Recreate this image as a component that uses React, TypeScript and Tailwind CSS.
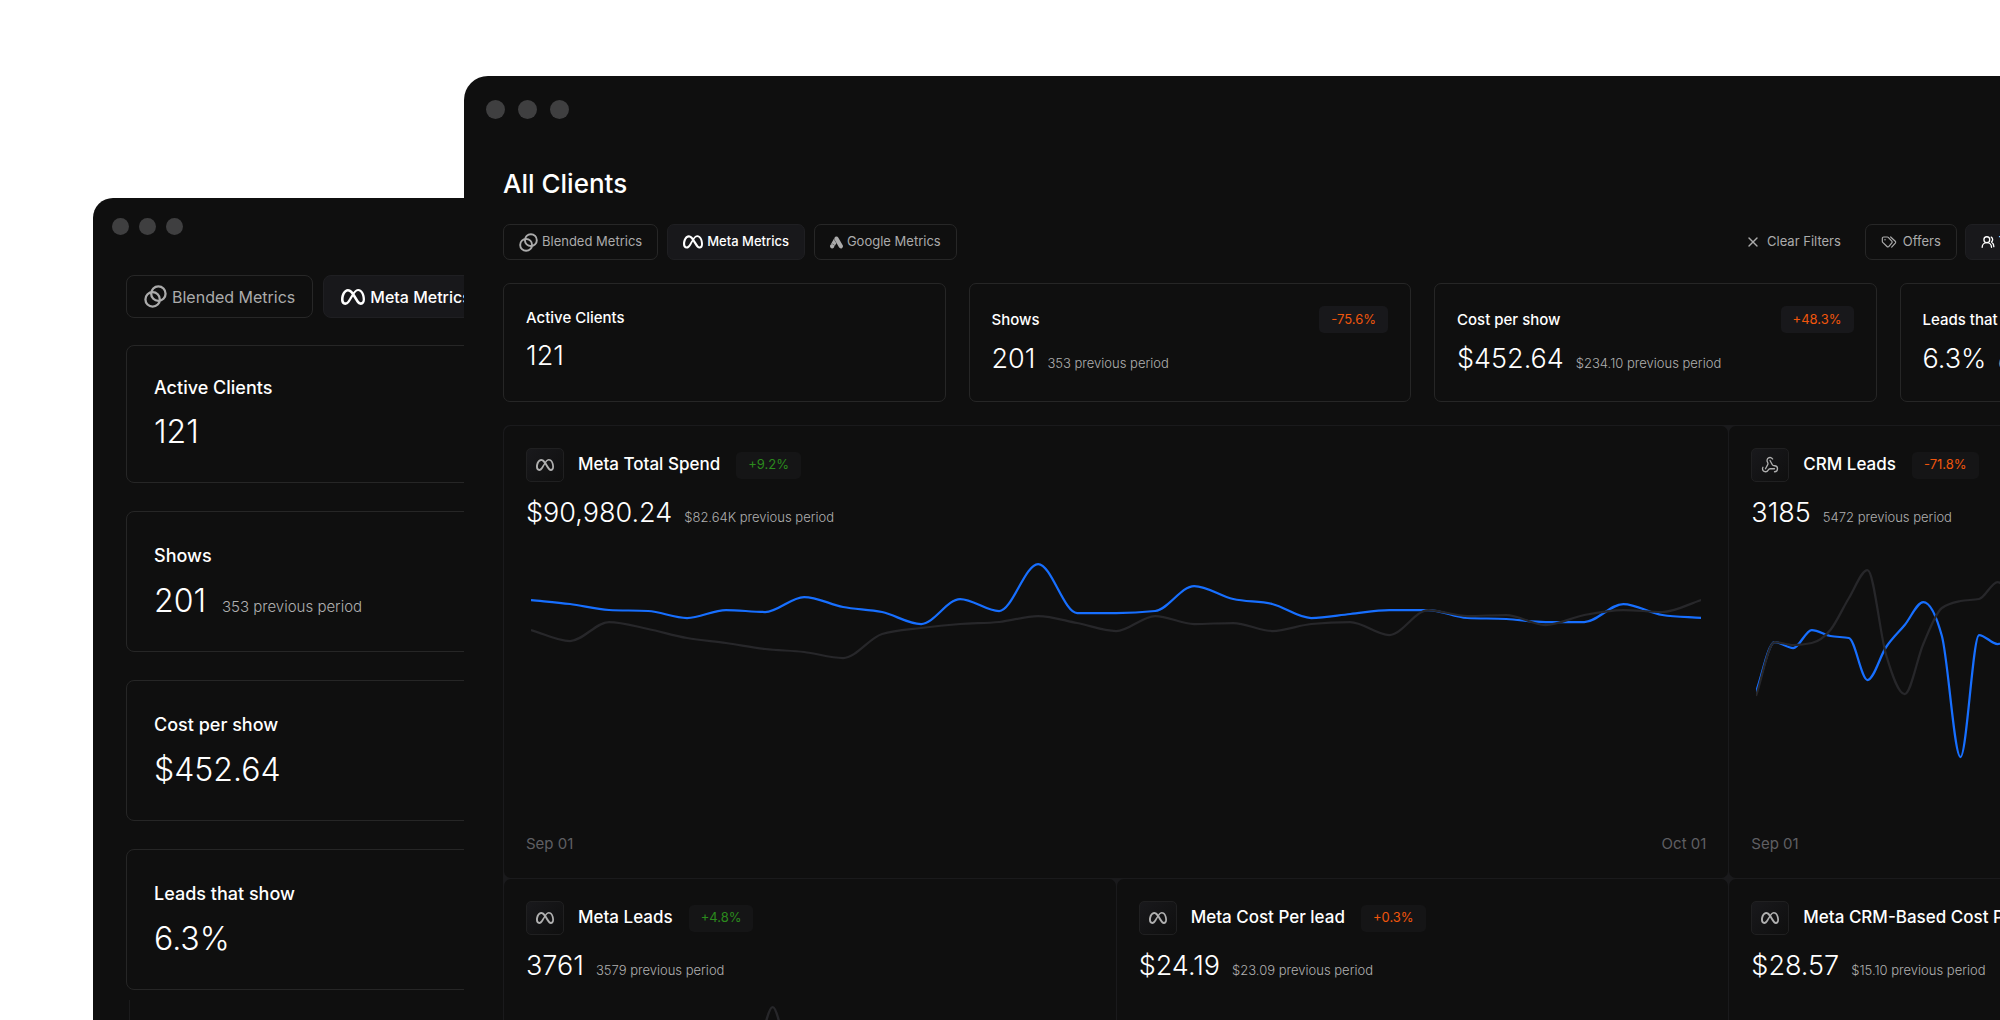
import type { ReactNode } from "react";
import clsx from "clsx";
import { UsersRound, Webhook, X } from "lucide-react";
import { FaMeta } from "react-icons/fa6";
import { SiGoogleads } from "react-icons/si";

type Size = "md" | "lg";

type Metric = {
  label: string;
  value: string;
  previous?: string;
  change?: string;
  good?: boolean;
};

// Daily series, one point per day. Measured downwards from the top of a 280 unit plot.
const PLOT_HEIGHT = 280;

const spend = {
  current: [
    60, 64, 70, 71, 78, 70, 72, 57, 67, 72, 84, 59, 71, 24, 73, 73, 71, 46, 59, 64, 78, 74, 70, 70,
    78, 79, 82, 82, 64, 75, 78,
  ],
  previous: [
    90, 101, 82, 89, 98, 103, 109, 112, 118, 94, 88, 84, 82, 76, 83, 91, 76, 84, 83, 91, 84, 82, 95,
    70, 76, 75, 85, 75, 70, 72, 60,
  ],
};

const crmLeads = {
  current: [
    152, 102, 108, 90, 96, 98, 140, 107, 85, 62, 96, 217, 95, 104, 96, 88, 110, 124, 98, 90, 84, 102,
    118, 130, 96, 88, 92, 104, 99, 90, 94,
  ],
  previous: [
    156, 102, 105, 103, 90, 58, 30, 115, 154, 104, 68, 61, 59, 42, 66, 80, 92, 71, 64, 88, 102, 96,
    84, 70, 66, 78, 90, 101, 88, 74, 80,
  ],
};

const metaLeads = {
  current: [
    120, 126, 118, 122, 130, 124, 116, 121, 128, 133, 125, 119, 116, 122, 127, 131, 124, 118, 121,
    126, 130, 123, 117, 120, 125, 129, 124, 119, 122, 126, 121,
  ],
  previous: [
    140, 134, 138, 131, 128, 135, 141, 137, 130, 126, 132, 128, 80, 14, 82, 126, 133, 139, 131, 127,
    134, 140, 136, 129, 125, 131, 138, 133, 128, 135, 130,
  ],
};

const costPerLead = {
  current: [
    118, 121, 124, 119, 115, 120, 126, 123, 117, 114, 119, 125, 128, 122, 116, 118, 123, 127, 121,
    117, 120, 124, 126, 119, 115, 121, 125, 122, 118, 120, 123,
  ],
  previous: [
    132, 129, 126, 130, 135, 133, 128, 124, 127, 131, 136, 134, 129, 125, 128, 132, 137, 133, 127,
    124, 129, 134, 131, 126, 128, 133, 136, 130, 125, 127, 131,
  ],
};

const kpis: Metric[] = [
  { label: "Active Clients", value: "121" },
  { label: "Shows", value: "201", previous: "353", change: "-75.6%" },
  { label: "Cost per show", value: "$452.64", previous: "$234.10", change: "+48.3%" },
  { label: "Leads that show", value: "6.3%", previous: "6.5%", change: "-3.1%" },
];

/** Monotone cubic path, so the line never overshoots its points. */
function linePath(values: number[], step: number) {
  const slopes = values.slice(1).map((v, i) => (v - values[i]) / step);
  const tangents = values.map((_, i) => {
    if (i === 0) return slopes[0];
    if (i === values.length - 1) return slopes[slopes.length - 1];
    const a = slopes[i - 1];
    const b = slopes[i];
    if (a * b <= 0) return 0;
    return Math.sign(a) * Math.min(Math.abs(a), Math.abs(b), Math.abs(a + b) / 4) * 2;
  });
  return values.reduce((d, y, i) => {
    if (i === 0) return `M0,${y}`;
    const x = i * step;
    const c = step / 3;
    const y1 = values[i - 1] + tangents[i - 1] * c;
    const y2 = y - tangents[i] * c;
    return `${d}C${x - step + c},${y1} ${x - c},${y2} ${x},${y}`;
  }, "");
}

function LineChart({ current, previous }: { current: number[]; previous: number[] }) {
  const step = 10;
  return (
    <svg
      className="block h-[280px] w-full"
      viewBox={`0 0 ${(current.length - 1) * step} ${PLOT_HEIGHT}`}
      preserveAspectRatio="none"
      fill="none"
      strokeWidth="2.25"
      aria-hidden="true"
    >
      <path d={linePath(current, step)} stroke="#176fff" vectorEffect="non-scaling-stroke" />
      <path d={linePath(previous, step)} stroke="#27272a" vectorEffect="non-scaling-stroke" />
    </svg>
  );
}

function BlendIcon({ className }: { className?: string }) {
  return (
    <svg className={className} viewBox="0 0 24 24" fill="none" stroke="currentColor" strokeWidth="2.4">
      <circle cx="15" cy="9" r="7.5" />
      <circle cx="9" cy="15" r="7.5" />
    </svg>
  );
}

function TagsIcon({ className }: { className?: string }) {
  return (
    <svg
      className={className}
      viewBox="0 0 24 18"
      fill="none"
      stroke="currentColor"
      strokeWidth="1.8"
      strokeLinecap="round"
      strokeLinejoin="round"
    >
      <path d="M2 3.5a2 2 0 0 1 2-2h5.500a2 2 0 0 1 1.400.6l5.300 5.600a2 2 0 0 1 .1 2.700l-4.400 5.200a2 2 0 0 1-2.900.1L2.600 9.600A2 2 0 0 1 2 8.200z" />
      <path d="M14.500 1.500l6.900 6.400a2 2 0 0 1 .1 2.700l-5.500 6" />
      <path d="M6 5.500h.01" strokeWidth="2.200" />
    </svg>
  );
}

function WindowDots({ size = "md" }: { size?: Size }) {
  const dot = size === "md" ? "size-[19px]" : "size-[17px]";
  return (
    <div className={clsx("flex", size === "md" ? "gap-[13px] px-[22px] pt-6" : "gap-2.5 px-[19px] pt-5")}>
      {[0, 1, 2].map((i) => (
        <span key={i} className={clsx("rounded-full bg-[#3f3f40]", dot)} />
      ))}
    </div>
  );
}

function TabButton({
  icon,
  active,
  size = "md",
  className,
  children,
}: {
  icon: ReactNode;
  active?: boolean;
  size?: Size;
  className?: string;
  children: ReactNode;
}) {
  return (
    <button
      type="button"
      className={clsx(
        "flex shrink-0 items-center border whitespace-nowrap",
        size === "md" ? "h-9 gap-1 rounded-[7px] px-[15px] text-[13px]" : "h-[43px] gap-[5px] rounded-lg px-[17px] text-[16px]",
        active ? "border-[#1f1f22] bg-[#18181b] font-medium text-white" : "border-[#272727] text-[#ababab]",
        className,
      )}
    >
      {icon}
      {children}
    </button>
  );
}

function Change({ metric, size = "md", plain }: { metric: Metric; size?: Size; plain?: boolean }) {
  return (
    <span
      className={clsx(
        "flex items-center rounded-[5px] px-3 whitespace-nowrap",
        size === "md" ? "h-[27px] text-[13px]" : "h-[31px] text-[15px]",
        plain ? "bg-[#151516]" : "bg-[#18181b]",
        metric.good ? "text-[#2b8a1d]" : "text-[#f0560c]",
      )}
    >
      {metric.change}
    </span>
  );
}

function Value({ metric, size = "md" }: { metric: Metric; size?: Size }) {
  return (
    <div className={clsx("flex items-baseline whitespace-nowrap", size === "md" ? "gap-3" : "gap-4")}>
      <span className={clsx("font-light text-white", size === "md" ? "text-[27px]/9" : "text-[32px]/[44px]")}>
        {metric.value}
      </span>
      {metric.previous && (
        <span className={clsx("font-light text-[#b0b0b0]", size === "md" ? "text-[13px]" : "text-[15px]")}>
          {metric.previous} previous period
        </span>
      )}
    </div>
  );
}

function KpiCard({ metric, size = "md" }: { metric: Metric; size?: Size }) {
  return (
    <div
      className={clsx(
        "flex flex-col gap-2 border border-[#262626]",
        size === "md" ? "rounded-[7px] px-[22px] pt-[22px] pb-6" : "rounded-lg px-[27px] py-7",
      )}
    >
      <div className="flex items-center justify-between">
        <h2 className={clsx("font-medium text-white", size === "md" ? "text-[15px]/6" : "text-[18px]/7")}>
          {metric.label}
        </h2>
        {metric.change && <Change metric={metric} size={size} />}
      </div>
      <Value metric={metric} size={size} />
    </div>
  );
}

function ChartCard({
  metric,
  icon,
  series,
  className,
}: {
  metric: Metric;
  icon: ReactNode;
  series: { current: number[]; previous: number[] };
  className?: string;
}) {
  return (
    <article className={clsx("rounded-[7px] bg-[#0f0f0f] px-[22px] py-[22px]", className)}>
      <header className="flex items-center gap-3.5">
        <span className="flex h-[34px] w-[38px] shrink-0 items-center justify-center rounded-[5px] border border-[#202021] bg-linear-to-br from-[#19191c] to-[#0f0f0f] text-[#b0b0b0]">
          {icon}
        </span>
        <h2 className="pr-0.5 text-[17px] font-medium whitespace-nowrap text-white">{metric.label}</h2>
        <Change metric={metric} plain />
      </header>
      <div className="mt-[13px]">
        <Value metric={metric} />
      </div>
      <div className="mt-[9px] px-[5px]">
        <LineChart {...series} />
      </div>
      <div className="mt-3 flex justify-between text-[15px]/6 text-[#5f5f63]">
        <span>Sep 01</span>
        <span>Oct 01</span>
      </div>
    </article>
  );
}

function BackWindow() {
  return (
    <section className="absolute top-[198px] right-0 left-[93px] rounded-tl-[20px] bg-[#0f0f0f]">
      <WindowDots size="lg" />
      <div className="px-[33px] pt-10">
        <nav className="flex gap-2.5">
          <TabButton size="lg" icon={<BlendIcon className="size-[23px]" />}>
            Blended Metrics
          </TabButton>
          <TabButton size="lg" active icon={<FaMeta className="size-6" />}>
            Meta Metrics
          </TabButton>
        </nav>
        <div className="mt-[27px] flex flex-col gap-7">
          {kpis.map((metric) => (
            <KpiCard
              key={metric.label}
              size="lg"
              metric={metric.label === "Shows" ? metric : { ...metric, previous: undefined }}
            />
          ))}
        </div>
        <div className="mt-2.5 ml-[3px] h-[200px] border-l border-[#1b1b1c]" />
      </div>
    </section>
  );
}

function FrontWindow() {
  const meta = <FaMeta className="size-[18px]" />;
  return (
    <section className="absolute top-[76px] -right-[381px] left-[464px] rounded-t-[24px] bg-[#0f0f0f]">
      <WindowDots />
      <div className="px-[39px] pt-[47px] pb-10">
        <h1 className="text-[26px]/9 font-medium text-white">All Clients</h1>

        <div className="mt-[22px] flex justify-between">
          <nav className="flex gap-[9px]">
            <TabButton icon={<BlendIcon className="size-[19px]" />}>Blended Metrics</TabButton>
            <TabButton active icon={<FaMeta className="size-5" />}>
              Meta Metrics
            </TabButton>
            <TabButton icon={<SiGoogleads className="size-[13px]" />}>Google Metrics</TabButton>
          </nav>
          <div className="flex w-1/3 gap-2">
            <button
              type="button"
              className="flex h-9 items-center gap-1.5 px-4 text-[13px] whitespace-nowrap text-[#ababab]"
            >
              <X className="size-4" strokeWidth={2} />
              Clear Filters
            </button>
            <TabButton className="gap-1.5" icon={<TagsIcon className="h-3 w-4" />}>
              Offers
            </TabButton>
            <TabButton active className="flex-1" icon={<UsersRound className="size-3.5" strokeWidth={2.25} />}>
              Team
            </TabButton>
          </div>
        </div>

        <div className="mt-[23px] grid grid-cols-4 gap-[23px]">
          {kpis.map((metric) => (
            <KpiCard key={metric.label} metric={metric} />
          ))}
        </div>

        <div className="mt-[23px] grid grid-cols-3 gap-px rounded-[7px] bg-[#1a1a1c] p-px">
          <ChartCard
            className="col-span-2"
            icon={meta}
            series={spend}
            metric={{ label: "Meta Total Spend", value: "$90,980.24", previous: "$82.64K", change: "+9.2%", good: true }}
          />
          <ChartCard
            icon={<Webhook className="size-[18px]" strokeWidth={1.75} />}
            series={crmLeads}
            metric={{ label: "CRM Leads", value: "3185", previous: "5472", change: "-71.8%" }}
          />
          <ChartCard
            icon={meta}
            series={metaLeads}
            metric={{ label: "Meta Leads", value: "3761", previous: "3579", change: "+4.8%", good: true }}
          />
          <ChartCard
            icon={meta}
            series={costPerLead}
            metric={{ label: "Meta Cost Per lead", value: "$24.19", previous: "$23.09", change: "+0.3%" }}
          />
          <ChartCard
            icon={meta}
            series={costPerLead}
            metric={{ label: "Meta CRM-Based Cost Per Lead", value: "$28.57", previous: "$15.10", change: "+89.2%" }}
          />
        </div>
      </div>
    </section>
  );
}

export default function App() {
  return (
    <main className="relative h-screen overflow-hidden bg-white font-['Inter','Liberation_Sans',sans-serif]">
      <BackWindow />
      <FrontWindow />
    </main>
  );
}
